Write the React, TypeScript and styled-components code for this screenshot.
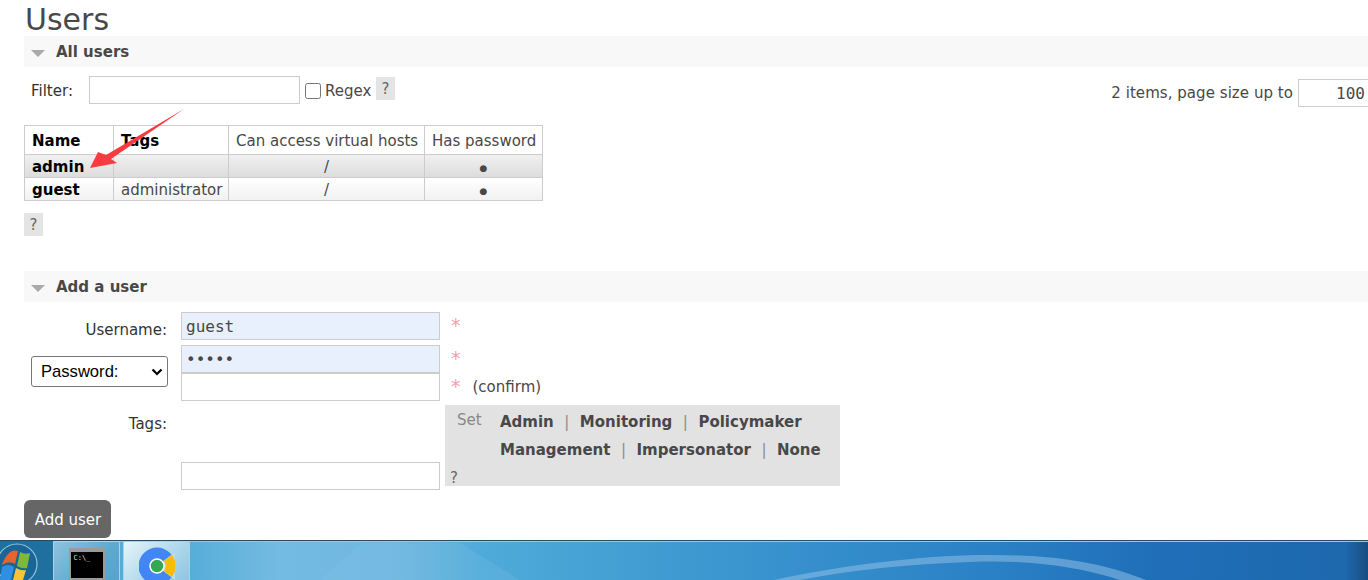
import styled, { createGlobalStyle } from 'styled-components';

const GlobalStyle = createGlobalStyle`
  html, body {
    margin: 0;
    padding: 0;
    background: #fff;
  }
  body {
    font-family: 'DejaVu Sans', Verdana, sans-serif;
    font-size: 15px;
    color: #484848;
  }
`;

const Page = styled.div`
  position: relative;
  width: 1368px;
  height: 580px;
  overflow: hidden;
  display: flex;
  flex-direction: column;
`;

const Main = styled.main`
  flex: 1;
  padding-left: 24px;
`;

const Title = styled.h1`
  margin: 0;
  height: 36px;
  padding-left: 1px;
  font-size: 30px;
  line-height: 39px;
  font-weight: 400;
  color: #484848;
`;

const SectionBar = styled.div`
  height: 31px;
  display: flex;
  align-items: center;
  gap: 11px;
  padding-left: 7px;
  background: #f8f8f8;
  font-size: 15px;
  font-weight: 700;
  color: #484848;
`;

const Triangle = styled.span`
  width: 0;
  height: 0;
  margin-top: 3px;
  border-left: 7px solid transparent;
  border-right: 7px solid transparent;
  border-top: 7px solid #aaa;
`;

const FilterRow = styled.div`
  height: 58px;
  display: flex;
  justify-content: space-between;
  padding-top: 9px;
  box-sizing: border-box;
`;

const FilterLeft = styled.div`
  display: flex;
  align-items: flex-start;
  padding-left: 7px;
`;

const FilterLabel = styled.label`
  width: 58px;
  line-height: 30px;
  color: #333;
`;

const TextInput = styled.input<{ $width?: number; $filled?: boolean }>`
  box-sizing: border-box;
  display: block;
  width: ${(p) => p.$width ?? 259}px;
  height: 28px;
  margin: 0;
  padding: 0 4px;
  border: 1px solid #ccc;
  border-radius: 0;
  outline: none;
  background: ${(p) => (p.$filled ? '#e8f0fe' : '#fff')};
  font-family: 'DejaVu Sans Mono', monospace;
  font-size: 16px;
  color: #484848;
`;

const RegexCheck = styled.input`
  width: 16px;
  height: 16px;
  margin: 7px 4px 0 5px;
`;

const RegexLabel = styled.span`
  width: 51px;
  line-height: 30px;
`;

const Help = styled.span`
  display: block;
  width: 19px;
  height: 23px;
  margin-top: 1px;
  background: #e4e4e4;
  text-align: center;
  font-size: 15px;
  line-height: 25px;
  color: #666;
`;

const Paging = styled.div`
  display: flex;
  align-items: flex-start;
  gap: 5px;
  margin-top: 3px;
  margin-right: -30px;
  line-height: 29px;
  letter-spacing: 0.05px;
`;

const PageSize = styled(TextInput)`
  width: 100px;
  text-align: right;
  padding-right: 32px;
  letter-spacing: 0;
`;

const UsersTable = styled.table`
  border-collapse: collapse;
  table-layout: fixed;
  width: 518px;
  font-size: 15px;
`;

const Th = styled.th<{ $width: number; $strong?: boolean }>`
  width: ${(p) => p.$width}px;
  height: 29px;
  box-sizing: border-box;
  padding: 1px 7px 0;
  border: 1px solid #ccc;
  background: #fff;
  text-align: left;
  white-space: nowrap;
  font-weight: ${(p) => (p.$strong ? 700 : 400)};
  color: ${(p) => (p.$strong ? '#000' : '#484848')};
`;

const Tr = styled.tr<{ $alt?: boolean }>`
  height: 23px;
  background: ${(p) =>
    p.$alt
      ? 'linear-gradient(#f0f0f0, #dcdcdc)'
      : 'linear-gradient(#ffffff, #f1f1f1)'};
`;

const Td = styled.td<{ $center?: boolean; $strong?: boolean }>`
  box-sizing: border-box;
  padding: 2px 7px 0;
  border: 1px solid #ccc;
  text-align: ${(p) => (p.$center ? 'center' : 'left')};
  font-weight: ${(p) => (p.$strong ? 700 : 400)};
  color: ${(p) => (p.$strong ? '#000' : '#484848')};
`;

const Dot = styled.span`
  font-size: 9px;
  vertical-align: 1px;
`;

const TableHelp = styled(Help)`
  margin: 12px 0 35px;
`;

const Form = styled.form`
  display: grid;
  grid-template-columns: 157px 259px 1fr;
  column-gap: 0;
  padding-top: 10px;
`;

const LabelCell = styled.label<{ $pad?: number }>`
  padding-top: ${(p) => p.$pad ?? 0}px;
  padding-right: 14px;
  text-align: right;
  color: #333;
  line-height: 18px;
`;

const SelectCell = styled.div`
  display: flex;
  justify-content: flex-end;
  align-items: center;
  padding: 0 13px 0 0;
  height: 31px;
  margin-top: 11px;
`;

const chevron =
  "data:image/svg+xml,%3Csvg xmlns='http://www.w3.org/2000/svg' width='12' height='8' viewBox='0 0 12 8'%3E%3Cpath d='M1.5 1.5 6 6l4.5-4.5' fill='none' stroke='%23000' stroke-width='2.2'/%3E%3C/svg%3E";

const Select = styled.select`
  box-sizing: border-box;
  width: 137px;
  height: 31px;
  padding-left: 9px;
  border: 1px solid #767676;
  border-radius: 3px;
  appearance: none;
  background: #fff url("${chevron}") no-repeat 119px 11px;
  font-family: 'Liberation Sans', Arial, sans-serif;
  font-size: 16.6px;
  color: #000;
`;

const InputStack = styled.div`
  display: flex;
  flex-direction: column;
`;

const Note = styled.div<{ $height: number }>`
  height: ${(p) => p.$height}px;
  padding-left: 11px;
  display: flex;
  align-items: flex-start;
  gap: 12px;
`;

const Star = styled.span`
  color: #f5a0ac;
  font-size: 19px;
  line-height: 20px;
  margin-top: 3px;
`;

const Confirm = styled.span`
  line-height: 28px;
`;

const Stars = styled.div`
  display: flex;
  flex-direction: column;
`;

const RowGap = styled.div<{ $height: number }>`
  height: ${(p) => p.$height}px;
  grid-column: 1 / -1;
`;

const TagsField = styled.div`
  height: 85px;
  display: flex;
  flex-direction: column;
  justify-content: flex-end;
`;

const TagsPanel = styled.div`
  margin-left: 5px;
  width: 395px;
  height: 81px;
  box-sizing: border-box;
  padding: 6px 0 0 12px;
  background: #e2e2e2;
  display: grid;
  grid-template-columns: 43px 1fr;
  align-content: start;
`;

const SetLabel = styled.span`
  color: #888;
  line-height: 18px;
`;

const TagLines = styled.div`
  display: flex;
  flex-direction: column;
  line-height: 28px;
  margin-top: -3px;
`;

const TagLine = styled.div`
  display: flex;
  gap: 10.5px;
`;

const Tag = styled.b`
  color: #484848;
`;

const TagSep = styled.span`
  color: #8a8a8a;
`;

const PanelHelp = styled.span`
  grid-column: 1 / -1;
  margin: 6px 0 0 -7px;
  line-height: 16px;
  color: #666;
`;

const SubmitButton = styled.button`
  display: block;
  width: 87px;
  height: 38px;
  margin-top: 10px;
  padding: 2px 0 0 1px;
  border: 0;
  border-radius: 6px;
  background: #666;
  color: #fff;
  font-family: inherit;
  font-size: 15px;
`;

const Arrow = styled.svg`
  position: absolute;
  left: 80px;
  top: 100px;
`;

const Taskbar = styled.footer`
  position: relative;
  height: 39px;
  flex: none;
  display: flex;
  overflow: hidden;
  border-top: 1px solid #2a4a63;
  box-shadow: inset 0 1px 0 #9cc7e4;
  background: linear-gradient(90deg, #55aed9 190px, #74bbe2 280px, #6db7e0 400px, #4fabd9 480px, #3d98d0 700px, #2a80c5 1000px, #1f6fb8 1150px, #1e68ae 1345px, #174d80 1368px);
`;

const Wallpaper = styled.svg`
  position: absolute;
  left: 190px;
  top: 1px;
`;

const StartArea = styled.div`
  width: 53px;
  flex: none;
  background: #20709f;
  overflow: hidden;
`;

const TaskButton = styled.div<{ $active?: boolean }>`
  position: relative;
  box-sizing: border-box;
  width: 67px;
  height: 39px;
  margin-left: ${(p) => (p.$active ? 3 : 0)}px;
  display: flex;
  justify-content: center;
  padding-top: ${(p) => (p.$active ? 4 : 6)}px;
  flex: none;
  border: 1px solid #a9d3ea;
  border-bottom: 0;
  border-radius: 2px 2px 0 0;
  background: ${(p) =>
    p.$active
      ? 'linear-gradient(135deg, #e6f4fa, #acd7ea 60%, #8dc6e2)'
      : 'linear-gradient(135deg, #8fc3de, #5fa9d0 60%, #56a3cc)'};
`;

const Terminal = styled.div`
  box-sizing: border-box;
  width: 36px;
  height: 32px;
  padding: 2px 3px 0;
  border: 2px solid #9a9a9a;
  border-top-width: 4px;
  background: #000;
  color: #ddd;
  font-family: 'DejaVu Sans Mono', monospace;
  font-size: 7px;
  line-height: 8px;
`;

const App = () => {
  return (
    <Page>
      <GlobalStyle />
      <Main>
        <Title>Users</Title>
        <SectionBar>
          <Triangle />
          All users
        </SectionBar>
        <FilterRow>
          <FilterLeft>
            <FilterLabel>Filter:</FilterLabel>
            <TextInput $width={211} />
            <RegexCheck type="checkbox" />
            <RegexLabel>Regex</RegexLabel>
            <Help>?</Help>
          </FilterLeft>
          <Paging>
            2 items, page size up to
            <PageSize defaultValue="100" />
          </Paging>
        </FilterRow>
        <UsersTable>
          <thead>
            <tr>
              <Th $width={89} $strong>Name</Th>
              <Th $width={115} $strong>Tags</Th>
              <Th $width={196}>Can access virtual hosts</Th>
              <Th $width={118}>Has password</Th>
            </tr>
          </thead>
          <tbody>
            <Tr $alt>
              <Td $strong>admin</Td>
              <Td />
              <Td $center>/</Td>
              <Td $center><Dot>●</Dot></Td>
            </Tr>
            <Tr>
              <Td $strong>guest</Td>
              <Td>administrator</Td>
              <Td $center>/</Td>
              <Td $center><Dot>●</Dot></Td>
            </Tr>
          </tbody>
        </UsersTable>
        <TableHelp>?</TableHelp>
        <SectionBar>
          <Triangle />
          Add a user
        </SectionBar>
        <Form onSubmit={(e) => e.preventDefault()}>
          <LabelCell $pad={9}>Username:</LabelCell>
          <TextInput $filled defaultValue="guest" />
          <Note $height={28}>
            <Star>*</Star>
          </Note>
          <RowGap $height={5} />
          <SelectCell>
            <Select defaultValue="Password:">
              <option>Password:</option>
              <option>Hashed password:</option>
            </Select>
          </SelectCell>
          <InputStack>
            <TextInput $filled type="password" defaultValue="guest" />
            <TextInput />
          </InputStack>
          <Stars>
            <Note $height={28}>
              <Star>*</Star>
            </Note>
            <Note $height={28}>
              <Star>*</Star>
              <Confirm>(confirm)</Confirm>
            </Note>
          </Stars>
          <RowGap $height={4} />
          <LabelCell $pad={10}>Tags:</LabelCell>
          <TagsField>
            <TextInput />
          </TagsField>
          <TagsPanel>
            <SetLabel>Set</SetLabel>
            <TagLines>
              <TagLine>
                <Tag>Admin</Tag>
                <TagSep>|</TagSep>
                <Tag>Monitoring</Tag>
                <TagSep>|</TagSep>
                <Tag>Policymaker</Tag>
              </TagLine>
              <TagLine>
                <Tag>Management</Tag>
                <TagSep>|</TagSep>
                <Tag>Impersonator</Tag>
                <TagSep>|</TagSep>
                <Tag>None</Tag>
              </TagLine>
            </TagLines>
            <PanelHelp>?</PanelHelp>
          </TagsPanel>
        </Form>
        <SubmitButton>Add user</SubmitButton>
      </Main>

      <Arrow width="110" height="75" viewBox="0 0 110 75">
        <path d="M104 9 L31 59 L37 63 L10 68 L18 52 L26 55 Z" fill="#f73b3f" />
      </Arrow>

      <Taskbar>
        <Wallpaper width="1178" height="38" viewBox="0 0 1178 38">
          <path d="M130 38 L172 1 L270 1 L330 38 Z" fill="#8ec6e8" opacity="0.18" />
          <path d="M584 38 C 660 22, 730 14, 790 13 C 860 12, 910 20, 956 38 L 930 38 C 880 22, 830 18, 780 20 C 720 22, 660 28, 610 38 Z" fill="#8fc0e6" opacity="0.55" />
        </Wallpaper>
        <StartArea>
          <svg width="53" height="39" viewBox="0 0 53 39">
            <circle cx="17" cy="23" r="20" fill="#1a6597" stroke="#8fc3de" strokeWidth="1.2" />
            <path d="M3 21 Q9 7 18 10 L15 23 Q9 19 2 24 Z" fill="#e8632b" />
            <path d="M20 11 Q25 14 30 12 L27 27 Q22 28 17 25 Z" fill="#7fb93c" />
            <path d="M2 26 Q8 22 14 26 L11 39 L0 39 Z" fill="#2f8fe0" />
            <path d="M16 27 Q21 30 26 29 L23 39 L13 39 Z" fill="#f7c531" />
          </svg>
        </StartArea>
        <TaskButton>
          <Terminal>C:\_</Terminal>
        </TaskButton>
        <TaskButton $active>
          <svg width="36" height="36" viewBox="0 0 36 36">
            <circle cx="18" cy="20" r="18.5" fill="#4285f4" />
            <path d="M18 20 L40 3 L40 37 Z" fill="#b9def0" />
            <path d="M25 15 L33 9 A18.5 18.5 0 0 1 33 31 L25 25 A8.5 8.5 0 0 0 25 15 Z" fill="#fbbc05" />
            <circle cx="18" cy="20" r="7" fill="#34a853" stroke="#fff" strokeWidth="1.5" />
          </svg>
        </TaskButton>
      </Taskbar>
    </Page>
  );
};

export default App;
